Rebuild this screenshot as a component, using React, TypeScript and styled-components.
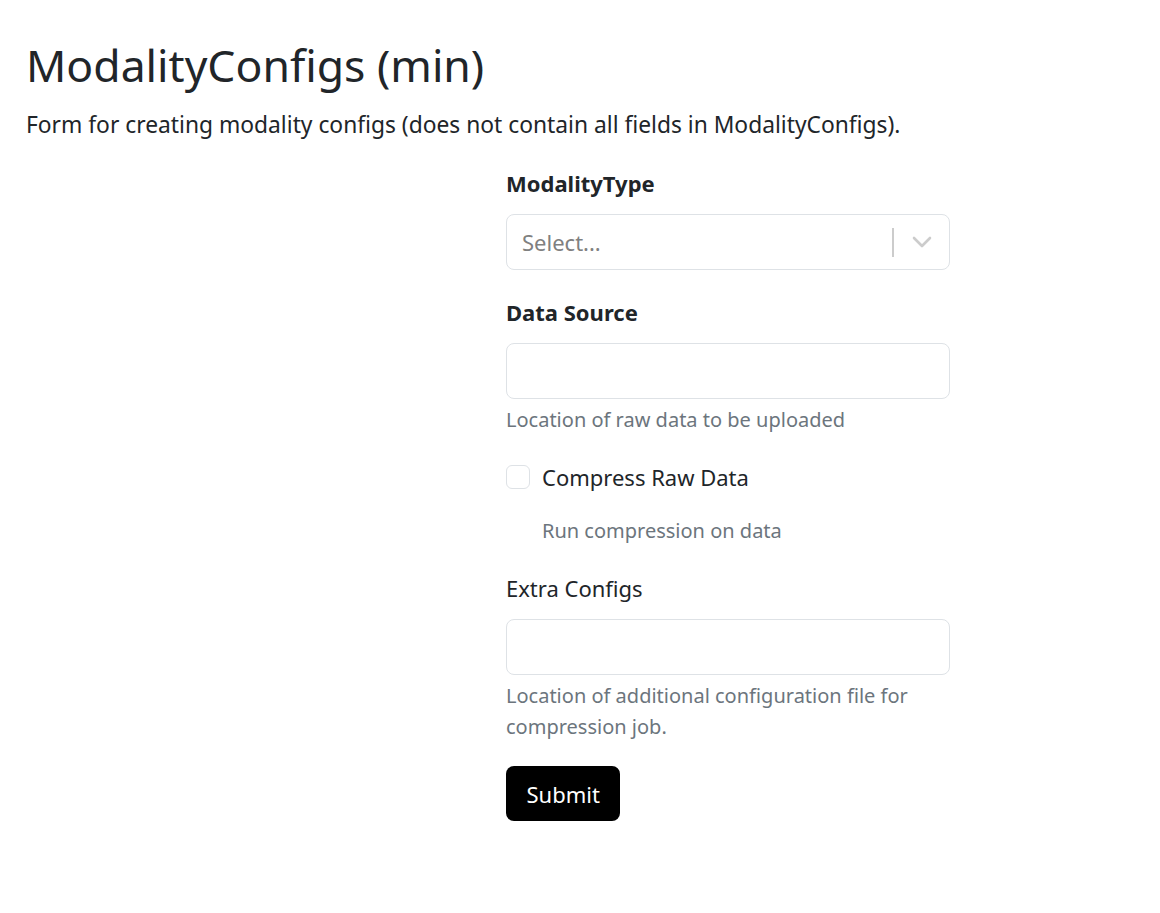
import { createGlobalStyle, styled } from "styled-components";

const GlobalStyle = createGlobalStyle`
  body {
    margin: 0;
    background: #fff;
    font-family: "Noto Sans", "Open Sans", sans-serif;
    color: #212529;
  }
`;

export default function App() {
  return (
    <Page>
      <GlobalStyle />
      <Title>ModalityConfigs (min)</Title>
      <Subtitle>
        Form for creating modality configs (does not contain all fields in ModalityConfigs).
      </Subtitle>
      <Form onSubmit={(e) => e.preventDefault()}>
        <Field>
          <Label $bold>ModalityType</Label>
          <SelectBox>
            <Placeholder>Select...</Placeholder>
            <Separator />
            <Chevron viewBox="0 0 20 12" aria-hidden="true">
              <polyline points="2,2 10,10 18,2" />
            </Chevron>
          </SelectBox>
        </Field>

        <Field>
          <Label $bold>Data Source</Label>
          <TextInput type="text" />
          <Help>Location of raw data to be uploaded</Help>
        </Field>

        <Field>
          <CheckRow>
            <Check type="checkbox" />
            <CheckLabel>Compress Raw Data</CheckLabel>
          </CheckRow>
          <CheckHelp>Run compression on data</CheckHelp>
        </Field>

        <Field>
          <Label>Extra Configs</Label>
          <TextInput type="text" />
          <Help>Location of additional configuration file for compression job.</Help>
        </Field>

        <SubmitButton type="submit">Submit</SubmitButton>
      </Form>
    </Page>
  );
}

const Page = styled.div`
  padding: 37px 26px 60px;
`;

const Title = styled.h1`
  margin: 0;
  font-size: 44.5px;
  font-weight: 400;
  line-height: 56px;
  color: #212529;
`;

const Subtitle = styled.p`
  margin: 16px 0 0;
  font-size: 22.8px;
  line-height: 32px;
`;

const Form = styled.form`
  margin: 26px 0 0 480px;
  width: 444px;
  display: flex;
  flex-direction: column;
`;

const Field = styled.div`
  display: flex;
  flex-direction: column;
  margin-bottom: 26px;

  &:last-of-type {
    margin-bottom: 24px;
  }
`;

const Label = styled.label<{ $bold?: boolean }>`
  font-size: 22px;
  line-height: 32px;
  font-weight: ${(p) => (p.$bold ? 700 : 400)};
  margin-bottom: 15px;
`;

const SelectBox = styled.div`
  height: 56px;
  box-sizing: border-box;
  border: 1px solid #dee2e6;
  border-radius: 8px;
  display: flex;
  align-items: center;
  padding: 0 0 0 15px;
`;

const Placeholder = styled.span`
  flex: 1;
  font-size: 22px;
  color: #808080;
`;

const Separator = styled.span`
  width: 2px;
  height: 29px;
  background: #ccc;
`;

const Chevron = styled.svg`
  width: 20px;
  height: 12px;
  margin: 0 17px 0 18px;
  fill: none;
  stroke: #ccc;
  stroke-width: 2.6;
  stroke-linecap: round;
  stroke-linejoin: round;
`;

const TextInput = styled.input`
  height: 56px;
  box-sizing: border-box;
  border: 1px solid #dee2e6;
  border-radius: 8px;
  font: inherit;
  font-size: 22px;
  padding: 0 15px;
  outline: none;
`;

const Help = styled.div`
  margin-top: 5px;
  font-size: 20px;
  line-height: 31px;
  color: #6c757d;
`;

const CheckRow = styled.div`
  display: flex;
  align-items: center;
  gap: 12px;
`;

const Check = styled.input`
  appearance: none;
  width: 24px;
  height: 24px;
  margin: 0;
  border: 1px solid #dee2e6;
  border-radius: 6px;
  background: #fff;
`;

const CheckLabel = styled.span`
  font-size: 22px;
  line-height: 32px;
`;

const CheckHelp = styled.div`
  margin: 22px 0 0 36px;
  font-size: 20px;
  line-height: 31px;
  color: #6c757d;
`;

const SubmitButton = styled.button`
  align-self: flex-start;
  height: 55px;
  padding: 0 20.5px;
  border: none;
  border-radius: 8px;
  background: #000;
  color: #fff;
  font: inherit;
  font-size: 22px;
`;
